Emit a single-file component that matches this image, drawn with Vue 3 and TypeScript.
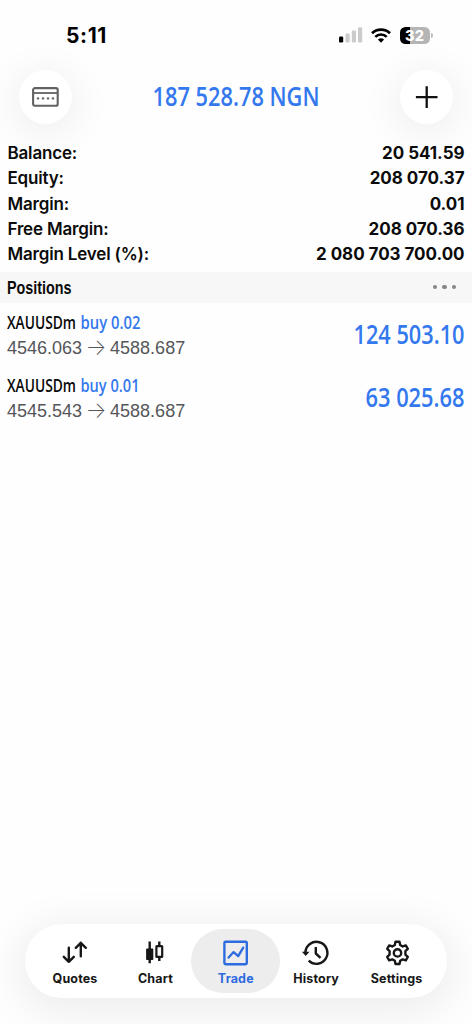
<script setup lang="ts">
interface SummaryRow { label: string; value: string }
interface Position { symbol: string; side: string; sideWidth: number; open: string; current: string; profit: string; profitWidth: number }

const summary: SummaryRow[] = [
  { label: 'Balance:', value: '20 541.59' },
  { label: 'Equity:', value: '208 070.37' },
  { label: 'Margin:', value: '0.01' },
  { label: 'Free Margin:', value: '208 070.36' },
  { label: 'Margin Level (%):', value: '2 080 703 700.00' },
]

const positions: Position[] = [
  { symbol: 'XAUUSDm', side: 'buy 0.02', sideWidth: 60, open: '4546.063', current: '4588.687', profit: '124 503.10', profitWidth: 111 },
  { symbol: 'XAUUSDm', side: 'buy 0.01', sideWidth: 59, open: '4545.543', current: '4588.687', profit: '63 025.68', profitWidth: 99 },
]

const tabs: string[] = ['Quotes', 'Chart', 'Trade', 'History', 'Settings']
const active = 'Trade'
</script>

<template>
  <div class="screen">
    <div class="status">
      <span class="clock">5:11</span>
      <div class="indicators">
        <svg class="signal" width="24" height="16" viewBox="0 0 24 16">
          <rect x="0" y="9.5" width="4.2" height="6" rx="1.2" fill="#000" />
          <rect x="6.5" y="6.5" width="4.2" height="9" rx="1.2" fill="#cbcbcb" />
          <rect x="12.8" y="3.5" width="4.2" height="12" rx="1.2" fill="#cbcbcb" />
          <rect x="19" y="0.2" width="4.2" height="15.3" rx="1.2" fill="#cbcbcb" />
        </svg>
        <svg class="wifi" width="20" height="15" viewBox="0 0 20 15">
          <g fill="none" stroke="#000" stroke-width="2.7">
            <path d="M1 5.2a12.9 12.9 0 0 1 18 0" />
            <path d="M4.3 8.9a8 8 0 0 1 11.4 0" />
          </g>
          <path d="M6.9 11.6a4.5 4.5 0 0 1 6.2 0L10 14.8z" fill="#000" />
        </svg>
        <span class="battery"><span class="level">32</span></span>
        <span class="battery-tip"></span>
      </div>
    </div>

    <header class="header">
      <button class="round">
        <svg width="27" height="20" viewBox="0 0 27 20">
          <rect x="1.1" y="1.1" width="24.6" height="17.6" rx="1.8" fill="none" stroke="#626262" stroke-width="2.1" />
          <path d="M1 6h25" stroke="#626262" stroke-width="1.8" />
          <g fill="#626262">
            <circle cx="6" cy="11.4" r="1.2" /><circle cx="11" cy="11.4" r="1.2" />
            <circle cx="16" cy="11.4" r="1.2" /><circle cx="21" cy="11.4" r="1.2" />
          </g>
        </svg>
      </button>
      <svg class="din title" width="172" height="44">
        <text x="2.5" y="31.4" textLength="167" lengthAdjust="spacingAndGlyphs">187 528.78 NGN</text>
      </svg>
      <button class="round">
        <svg width="24" height="24" viewBox="0 0 24 24">
          <path d="M11.7 1.3v21.6M.9 12.1h21.6" stroke="#111" stroke-width="2.3" fill="none" />
        </svg>
      </button>
    </header>

    <section class="summary">
      <div v-for="row in summary" :key="row.label" class="row">
        <span class="label">{{ row.label }}</span><span class="value">{{ row.value }}</span>
      </div>
    </section>

    <div class="section-bar">
      <svg class="heading" width="72" height="28">
        <text x="0" y="20.5" textLength="64.5" lengthAdjust="spacingAndGlyphs">Positions</text>
      </svg>
      <div class="dots"><i></i><i></i><i></i></div>
    </div>

    <ul class="positions">
      <li v-for="p in positions" :key="p.open" class="position">
        <div>
          <div class="name">
            <svg class="din symbol" width="73" height="28">
              <text x="0" y="21.3" textLength="69" lengthAdjust="spacingAndGlyphs">{{ p.symbol }}</text>
            </svg>
            <svg class="din" width="66" height="28">
              <text x=".5" y="21.3" :textLength="p.sideWidth" lengthAdjust="spacingAndGlyphs">{{ p.side }}</text>
            </svg>
          </div>
          <div class="prices"><span>{{ p.open }}</span><span class="arrow">→</span><span>{{ p.current }}</span></div>
        </div>
        <svg class="din profit" width="120" height="42">
          <text :x="119.5 - p.profitWidth" y="30.5" :textLength="p.profitWidth" lengthAdjust="spacingAndGlyphs">{{ p.profit }}</text>
        </svg>
      </li>
    </ul>

    <nav class="tabs">
      <button v-for="tab in tabs" :key="tab" class="tab" :class="{ active: tab === active }">
        <svg width="28" height="28" viewBox="0 0 28 28" fill="none" stroke="currentColor" stroke-width="2.4">
          <g v-if="tab === 'Quotes'" stroke-linecap="round" stroke-linejoin="round">
            <path d="M7.8 8.8v14M2.8 17.8l5 5 5-5M19.8 17.2V3.8M14.8 8.8l5-5 5 5" />
          </g>
          <g v-else-if="tab === 'Chart'">
            <rect x="5.1" y="9.6" width="7.2" height="11.4" rx=".8" fill="currentColor" stroke="none" />
            <path d="M8.7 2.6v21.6M18.3 2.6v5M18.3 18v4" />
            <rect x="15.4" y="7.2" width="5.8" height="10.6" rx=".4" stroke-width="2.2" />
          </g>
          <g v-else-if="tab === 'Trade'" stroke-linejoin="round">
            <rect x="2.4" y="2.8" width="22.4" height="22.4" rx="1.2" />
            <path d="M6.6 18.6l5-5.5 4.6 4.1 5-8.6" stroke-width="2.3" stroke-linecap="round" />
          </g>
          <g v-else-if="tab === 'History'">
            <path d="M3.4 13.5A11 11 0 1 1 6.7 21.7" />
            <path d="M-.1 12.8h7.6l-3.8 4.3z" fill="currentColor" stroke="none" />
            <path d="M13.8 8v6.5l4.7 4.3" stroke-linejoin="round" />
          </g>
          <g v-else stroke-linejoin="round">
            <circle cx="14.5" cy="13.9" r="3.7" />
            <path d="M12.5 2.8h4l.7 3.2 2.5 1.45 3.1-1 2 3.45-2.4 2.2v3.6l2.4 2.2-2 3.45-3.1-1-2.5 1.45-.7 3.2h-4l-.7-3.2-2.5-1.45-3.1 1-2-3.45 2.4-2.2v-3.6l-2.4-2.2 2-3.45 3.1 1L11.8 6z" />
          </g>
        </svg>
        <span>{{ tab }}</span>
      </button>
    </nav>
  </div>
</template>

<style>
html, body { margin: 0; background: #fefefe; }
</style>

<style scoped>
.screen {
  width: 472px; height: 1024px; display: flex; flex-direction: column; overflow: hidden;
  background: #fefefe; color: #0b0b0b; font-family: Inter, "Liberation Sans", sans-serif;
}
button { border: 0; padding: 0; margin: 0; font: inherit; color: inherit; }
svg { display: block; flex: none; overflow: visible; }
.status { height: 70px; flex: none; box-sizing: border-box; padding: 0 39.5px 0 66px; display: flex; justify-content: space-between; align-items: center; }
.clock { font-size: 21px; font-weight: 700; color: #000; letter-spacing: .6px; }
.indicators { display: flex; align-items: center; }
.wifi { margin-left: 8px; }
.battery {
  margin-left: 9px; width: 30px; height: 17px; border-radius: 5.5px; display: flex; justify-content: center; align-items: center;
  background: linear-gradient(90deg, #000 32%, #b5b5b5 32%);
}
.level { font-size: 14.5px; line-height: 17px; font-weight: 800; color: #fff; }
.battery-tip { width: 2px; height: 5px; margin-left: 1px; background: #bcbcbc; border-radius: 0 2px 2px 0; }
.header { height: 54px; flex: none; padding: 0 19px; display: flex; align-items: center; justify-content: space-between; }
.round {
  width: 53px; height: 54px; border-radius: 50%; background: #fff; display: flex; align-items: center; justify-content: center;
  box-shadow: 0 6px 38px 6px rgba(0, 0, 0, .06);
}
.din { font-family: "Open Sans", "Noto Sans", sans-serif; font-weight: 600; fill: #3478ee; }
.title, .profit { font-size: 27.3px; }
.summary { margin: 16.6px 7.5px 4.9px; }
.row { height: 25.25px; display: flex; align-items: center; justify-content: space-between; font-size: 17px; font-weight: 600; }
.label { letter-spacing: -.18px; }
.value { font-weight: 700; letter-spacing: -.03px; }
.section-bar { height: 31px; flex: none; padding: 0 16px 0 7px; display: flex; align-items: center; justify-content: space-between; background: #f7f7f7; }
.heading { font: 700 18.5px "Liberation Sans", Arial, sans-serif; fill: #0b0b0b; }
.dots { display: flex; gap: 5px; }
.dots i { width: 4.5px; height: 4.5px; border-radius: 50%; background: #858585; }
.positions { list-style: none; margin: 5px 0 0; padding: 0; }
.position { height: 63.5px; padding: 0 7.5px 0 7px; display: flex; justify-content: space-between; }
.name { display: flex; font-size: 18.8px; }
.symbol { fill: #090909; font-weight: 650; }
.prices { display: flex; margin-top: 1px; font: 18px/22px "Liberation Sans", Arial, sans-serif; color: #55565a; }
.arrow { width: 28px; display: flex; justify-content: center; font-family: Inter, sans-serif; font-weight: 200; font-size: 22px; line-height: 20px; }
.profit { margin-top: 5px; }
.tabs {
  margin: auto 25px 26px; height: 74px; box-sizing: border-box; padding: 5px 6px; border-radius: 37px; background: #fff;
  display: grid; grid-template-columns: repeat(5, 80.4px); justify-content: center;
  box-shadow: 0 8px 40px 8px rgba(0, 0, 0, .065);
}
.tab {
  display: flex; flex-direction: column; align-items: center; box-sizing: border-box; width: 89px; height: 64px; margin: 0 -4.5px;
  padding-top: 10.4px; border-radius: 32px; background: none; color: #171717; font-size: 12.5px; font-weight: 700; line-height: 16px; letter-spacing: .15px;
}
.tab span { margin-top: 3.4px; }
.tab.active { background: #ededed; color: #2d6be0; }
</style>
